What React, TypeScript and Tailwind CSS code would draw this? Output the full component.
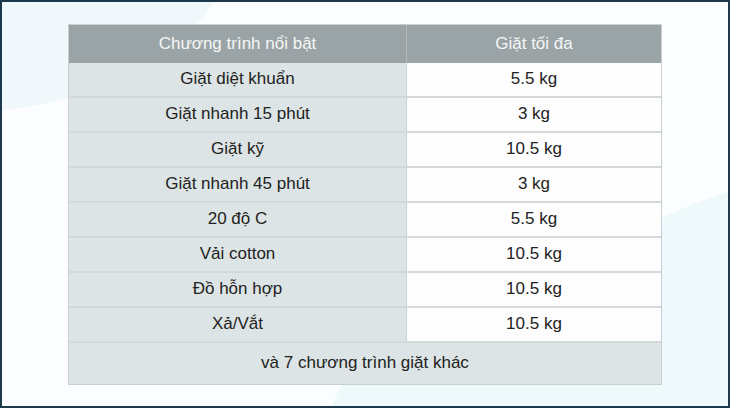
import React from 'react';

const rows = [
  { name: 'Giặt diệt khuẩn', load: '5.5 kg' },
  { name: 'Giặt nhanh 15 phút', load: '3 kg' },
  { name: 'Giặt kỹ', load: '10.5 kg' },
  { name: 'Giặt nhanh 45 phút', load: '3 kg' },
  { name: '20 độ C', load: '5.5 kg' },
  { name: 'Vải cotton', load: '10.5 kg' },
  { name: 'Đồ hỗn hợp', load: '10.5 kg' },
  { name: 'Xả/Vắt', load: '10.5 kg' },
];

export default function App() {
  return (
    <div
      className="relative w-[730px] h-[408px] overflow-hidden border-2 border-[#1d3a4a] bg-[#f2f9fc]"
      style={{ fontFamily: '"Liberation Sans", Arial, sans-serif' }}
    >
      {/* background shapes */}
      <svg className="absolute inset-0" width="726" height="404" viewBox="0 0 726 404">
        <path d="M212 0 C170 60 90 100 0 108 L0 0 Z" fill="#f0f8fc" />
        <path d="M212 0 C170 60 90 100 0 108 L0 404 L726 404 L726 0 Z" fill="#fbfdfe" />
        <path d="M330 404 C360 330 420 300 500 280 C600 250 660 210 726 190 L726 404 Z" fill="#edf9fb" />
      </svg>

      <div className="relative ml-[66px] mt-[22px] w-[594px] border border-[#c9d0d2] text-[17px] leading-none">
        {/* Header */}
        <div className="flex h-[38px] bg-[#9aa3a5] text-[#f5f7f7]">
          <div className="w-[338px] flex items-center justify-center pb-[2px] border-r border-[#b3babc]">
            Chương trình nổi bật
          </div>
          <div className="flex-1 flex items-center justify-center pb-[2px]">Giặt tối đa</div>
        </div>

        {rows.map((r) => (
          <div key={r.name} className="flex h-[35px] border-b-2 border-[#d3d9da] text-[#222222]">
            <div className="w-[338px] flex items-center justify-center pb-[2px] bg-[#dde4e5] border-r border-[#ccd3d4]">
              {r.name}
            </div>
            <div className="flex-1 flex items-center justify-center pb-[2px] bg-[#fdfdfd]">{r.load}</div>
          </div>
        ))}

        {/* Footer */}
        <div className="flex h-[41px] items-center justify-center pb-[2px] bg-[#dde4e5] text-[#222222]">
          và 7 chương trình giặt khác
        </div>
      </div>
    </div>
  );
}
